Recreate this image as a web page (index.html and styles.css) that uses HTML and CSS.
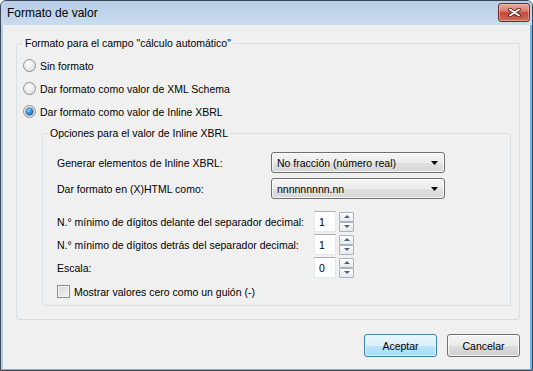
FILE: index.html
```html
<!DOCTYPE html>
<html lang="es">
<head>
<meta charset="utf-8">
<title>Formato de valor</title>
<link rel="stylesheet" href="styles.css">
</head>
<body>
<div class="window">
  <div class="titlebar">
    <span class="title">Formato de valor</span>
    <span class="close">
      <svg width="13" height="9" viewBox="0 0 13 9"><path d="M2 1.5 L11 7.5 M11 1.5 L2 7.5" stroke="#4a1a14" stroke-width="3.6" stroke-linecap="round"/><path d="M2 1.5 L11 7.5 M11 1.5 L2 7.5" stroke="#fff" stroke-width="2" stroke-linecap="round"/></svg>
    </span>
  </div>
  <div class="frame">
    <div class="client">
      <fieldset class="group outer">
        <legend>Formato para el campo "cálculo automático"</legend>
        <div class="radio-row"><span class="radio"></span>Sin formato</div>
        <div class="radio-row"><span class="radio"></span>Dar formato como valor de XML Schema</div>
        <div class="radio-row"><span class="radio checked"></span>Dar formato como valor de Inline XBRL</div>
        <fieldset class="group inner">
          <legend>Opciones para el valor de Inline XBRL</legend>
          <div class="options">
            <div class="select-row">
              <span class="lbl">Generar elementos de Inline XBRL:</span>
              <div class="combo"><span>No fracción (número real)</span><svg class="arrow" width="7" height="4" viewBox="0 0 7 4"><path d="M0 0 H7 L3.5 4 Z" fill="#000"/></svg></div>
            </div>
            <div class="select-row">
              <span class="lbl">Dar formato en (X)HTML como:</span>
              <div class="combo"><span>nnnnnnnnn.nn</span><svg class="arrow" width="7" height="4" viewBox="0 0 7 4"><path d="M0 0 H7 L3.5 4 Z" fill="#000"/></svg></div>
            </div>
            <div class="spin-rows">
              <div class="spin-row">
                <span class="lbl2">N.° mínimo de dígitos delante del separador decimal:</span>
                <div class="edit">1</div>
                <div class="spinner"><span class="sbtn up"></span><span class="sbtn down"></span></div>
              </div>
              <div class="spin-row">
                <span class="lbl2">N.° mínimo de dígitos detrás del separador decimal:</span>
                <div class="edit">1</div>
                <div class="spinner"><span class="sbtn up"></span><span class="sbtn down"></span></div>
              </div>
              <div class="spin-row">
                <span class="lbl2">Escala:</span>
                <div class="edit">0</div>
                <div class="spinner"><span class="sbtn up"></span><span class="sbtn down"></span></div>
              </div>
            </div>
            <div class="check-row"><span class="check"></span>Mostrar valores cero como un guión (-)</div>
          </div>
        </fieldset>
      </fieldset>
      <div class="buttons">
        <button class="btn default">Aceptar</button>
        <button class="btn">Cancelar</button>
      </div>
    </div>
  </div>
</div>
</body>
</html>
```
FILE: styles.css
```css
html, body {
  margin: 0;
  padding: 0;
}
body {
  width: 533px;
  height: 371px;
  overflow: hidden;
  background: #ffffff;
  font-family: "Liberation Sans", Arial, sans-serif;
  font-size: 10.5px;
  color: #000;
  white-space: nowrap;
}
.window {
  box-sizing: border-box;
  width: 533px;
  height: 371px;
  border: 1px solid #3b4756;
  border-radius: 6px 6px 0 0;
  background: #c4d7ec;
  display: flex;
  flex-direction: column;
  overflow: hidden;
}
.titlebar {
  height: 24px;
  flex: none;
  display: flex;
  align-items: center;
  justify-content: space-between;
  padding: 0 2px 0 6px;
  background: linear-gradient(to bottom, #b7cde7, #c3d6ec 60%, #cadcef);
}
.title {
  font-size: 12px;
  color: #000;
  padding-bottom: 1px;
}
.close {
  box-sizing: border-box;
  width: 32px;
  height: 19px;
  margin-top: -2px;
  border: 1px solid #6e2b25;
  border-radius: 3px;
  background: linear-gradient(to bottom, #e9a99b 0%, #d9806f 40%, #c5493a 52%, #cf6c5b 100%);
  box-shadow: inset 0 0 0 1px rgba(255, 210, 200, 0.5);
  display: flex;
  align-items: center;
  justify-content: center;
}
.frame {
  flex: 1;
  display: flex;
  border-left: 2px solid #b4cbe4;
  border-right: 2px solid #6fb3e8;
  border-bottom: 1px solid #6fb3e8;
}
.client {
  flex: 1;
  background: #f0f0f0;
  padding: 12px 10px 12px 13px;
  display: flex;
  flex-direction: column;
}
.group {
  margin: 0;
  border: 1px solid #d5dfe5;
  border-radius: 3px;
  min-width: 0;
}
.group legend {
  padding: 0 2px;
  line-height: 13px;
  color: #000;
}
.outer {
  padding: 4px 8px 13px 6px;
}
.radio-row {
  height: 23px;
  display: flex;
  align-items: center;
  gap: 4px;
}
.radio {
  box-sizing: border-box;
  width: 13px;
  height: 13px;
  border-radius: 50%;
  border: 1px solid #8d8f91;
  background: radial-gradient(circle at 40% 35%, #ffffff 0%, #f2f2f2 35%, #d4d4d4 100%);
  display: flex;
  align-items: center;
  justify-content: center;
}
.radio.checked::after {
  content: "";
  width: 7px;
  height: 7px;
  border-radius: 50%;
  background: radial-gradient(circle at 40% 35%, #9ad8ff 0%, #2b8bd8 45%, #0b3f78 100%);
  box-shadow: 0 0 0 0.5px #1c3f66;
}
.inner {
  margin: 4px 0 0 19px;
  padding: 12px 0 7px 5px;
}
.options {
  margin-left: 9px;
  display: flex;
  flex-direction: column;
}
.select-row {
  height: 21px;
  display: flex;
  align-items: center;
}
.select-row + .select-row {
  margin-top: 5px;
}
.lbl {
  width: 214px;
  flex: none;
}
.combo {
  box-sizing: border-box;
  width: 174px;
  height: 21px;
  border: 1px solid #707070;
  border-radius: 3px;
  background: linear-gradient(to bottom, #f4f4f4 0%, #ececec 50%, #e0e0e0 51%, #d8d8d8 100%);
  box-shadow: inset 0 0 0 1px rgba(255, 255, 255, 0.7);
  display: flex;
  align-items: center;
  justify-content: space-between;
  padding: 0 6px 0 5px;
}
.arrow {
  flex: none;
}
.spin-rows {
  margin-top: 12px;
  display: flex;
  flex-direction: column;
  gap: 2px;
}
.spin-row {
  height: 21px;
  display: flex;
  align-items: center;
}
.lbl2 {
  width: 257px;
  flex: none;
}
.edit {
  box-sizing: border-box;
  width: 22px;
  height: 21px;
  border: 1px solid #e3e9ef;
  border-top-color: #abadb3;
  background: #fff;
  padding-left: 4px;
  display: flex;
  align-items: center;
}
.spinner {
  margin-left: 3px;
  width: 15px;
  height: 20px;
  display: flex;
  flex-direction: column;
  justify-content: space-between;
}
.sbtn {
  box-sizing: border-box;
  height: 10px;
  border: 1px solid #a9b3bf;
  border-radius: 1px;
  background: linear-gradient(to bottom, #fdfdfd, #e6e8ec);
  display: flex;
  align-items: center;
  justify-content: center;
}
.sbtn::after {
  content: "";
  width: 0;
  height: 0;
  border-left: 3px solid transparent;
  border-right: 3px solid transparent;
}
.up::after {
  border-bottom: 3px solid #4a6184;
}
.down::after {
  border-top: 3px solid #4a6184;
}
.check-row {
  margin-top: 7px;
  height: 13px;
  display: flex;
  align-items: center;
  gap: 4px;
}
.check {
  box-sizing: border-box;
  width: 13px;
  height: 13px;
  border: 1px solid #8e8f8f;
  background: linear-gradient(135deg, #d6d6d6, #f6f6f6);
  box-shadow: inset 0 0 0 1px #f4f4f4;
}
.buttons {
  margin-top: 14px;
  display: flex;
  justify-content: flex-end;
  gap: 10px;
}
.btn {
  box-sizing: border-box;
  width: 73px;
  height: 23px;
  margin: 0;
  padding: 0;
  font-family: "Liberation Sans", Arial, sans-serif;
  font-size: 10.5px;
  color: #000;
  border: 1px solid #707070;
  border-radius: 3px;
  background: linear-gradient(to bottom, #f2f2f2 0%, #ebebeb 50%, #dddddd 51%, #cfcfcf 100%);
  box-shadow: inset 0 0 0 1px rgba(255, 255, 255, 0.75);
}
.btn.default {
  border-color: #3c7fb1;
  background: linear-gradient(to bottom, #eaf6fd 0%, #d9f0fc 50%, #bee6fd 51%, #a7d9f5 100%);
  box-shadow: inset 0 0 0 1px rgba(255, 255, 255, 0.6);
}
```
